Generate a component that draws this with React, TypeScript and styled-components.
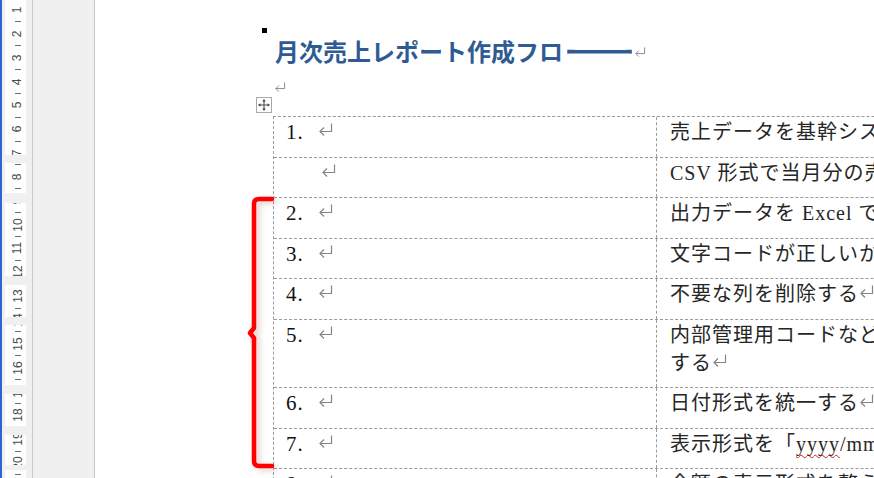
import type { ReactNode } from 'react';
import styled, { createGlobalStyle } from 'styled-components';

const GlobalStyle = createGlobalStyle`
  html, body {
    margin: 0;
    padding: 0;
    height: 100%;
    overflow: hidden;
    background: #fff;
  }
  #root {
    height: 100%;
  }
`;

type Step = {
    num?: string;
    lines: ReactNode[];
    mark?: boolean;
};

const rulerNumbers = Array.from({ length: 20 }, (_, i) => i + 1);

const ReturnMark = ({ small }: { small?: boolean }) => (
    <MarkSvg $small={small} viewBox="0 0 15 13">
        <path d="M13.5 0.5V8.5H2.2 M6 4.5L2 8.5L6 12.5" />
    </MarkSvg>
);

export default function App() {
    const steps: Step[] = [
        { num: '1.', lines: ['売上データを基幹システムから出力する'] },
        { lines: ['CSV 形式で当月分の売上データを抽出する'] },
        { num: '2.', lines: ['出力データを Excel で開いて確認する'] },
        { num: '3.', lines: ['文字コードが正しいか確認する'] },
        { num: '4.', lines: ['不要な列を削除する'], mark: true },
        { num: '5.', lines: ['内部管理用コードなどの不要な情報を非表示に', 'する'], mark: true },
        { num: '6.', lines: ['日付形式を統一する'], mark: true },
        {
            num: '7.',
            lines: [
                <>
                    表示形式を「<Squiggle>yyyy</Squiggle>/mm/dd」に統一する
                </>,
            ],
        },
        { num: '8.', lines: ['金額の表示形式を整える'] },
    ];

    return (
        <>
            <GlobalStyle />
            <Shell>
                <AccentEdge />
                <RulerBar>
                    <RulerStrip>
                        {rulerNumbers.map((n) => (
                            <RulerUnit key={n}>
                                <RulerCell>
                                    <RulerNum>{n}</RulerNum>
                                </RulerCell>
                                <RulerCell>
                                    <RulerTick />
                                </RulerCell>
                            </RulerUnit>
                        ))}
                    </RulerStrip>
                </RulerBar>
                <Gutter />
                <Page>
                    <Heading>
                        月次売上レポート作成フロ<LongBar>ー</LongBar>
                        <ReturnMark small />
                    </Heading>
                    <EmptyPara>
                        <ReturnMark small />
                    </EmptyPara>
                    <TableWrap>
                        <MoveHandle>
                            <svg width="12" height="12" viewBox="0 0 12 12">
                                <path d="M6 1.5V10.5M1.5 6H10.5" stroke="#444" strokeWidth="1" />
                                <path d="M6 0L4.2 2.4H7.8Z M6 12L4.2 9.6H7.8Z M0 6L2.4 4.2V7.8Z M12 6L9.6 4.2V7.8Z" fill="#444" />
                            </svg>
                        </MoveHandle>
                        <Bracket width="28" height="275" viewBox="0 0 28 275">
                            <path d="M24 3H11Q6 3 6 8V132L2 137L6 142V265Q6 270 11 270H24" />
                        </Bracket>
                        {steps.map((s, i) => (
                            <Row key={i}>
                                <NumCell>
                                    <NumLabel $empty={!s.num}>{s.num}</NumLabel>
                                    <ReturnMark />
                                </NumCell>
                                <TextCell>
                                    {s.lines.map((l, j) => (
                                        <Line key={j}>
                                            {l}
                                            {s.mark && j === s.lines.length - 1 && <ReturnMark />}
                                        </Line>
                                    ))}
                                </TextCell>
                            </Row>
                        ))}
                    </TableWrap>
                </Page>
            </Shell>
        </>
    );
}

const Shell = styled.div`
    display: flex;
    height: 478px;
    overflow: hidden;
`;

const AccentEdge = styled.div`
    width: 2px;
    flex-shrink: 0;
    background: #2b64d6;
`;

const RulerBar = styled.div`
    width: 31px;
    flex-shrink: 0;
    box-sizing: border-box;
    padding-left: 3px;
    padding-right: 6px;
    background: #f0f0f0;
    border-right: 1px solid #c8c8c8;
`;

const RulerStrip = styled.div`
    position: relative;
    height: 100%;
    background: #fff;
    padding-top: 4px;
    box-sizing: border-box;
    display: flex;
    flex-direction: column;

    // gray breaks over the scale, as the screen shows them
    &::after {
        content: '';
        position: absolute;
        inset: 0;
        background: linear-gradient(
            180deg,
            transparent 155px,
            #f0f0f0 155px 163px,
            transparent 163px 193px,
            #f0f0f0 193px 203px,
            transparent 203px 276px,
            #f0f0f0 276px 285px,
            transparent 285px 317px,
            #f0f0f0 317px 325px,
            transparent 325px 385px,
            #f0f0f0 385px 394px,
            transparent 394px 426px,
            #f0f0f0 426px 435px,
            transparent 435px 465px,
            #f0f0f0 465px 470px,
            transparent 470px
        );
    }
`;

const RulerUnit = styled.div`
    display: flex;
    flex-direction: column;
    flex-shrink: 0;
`;

const RulerCell = styled.div`
    height: 11.93px;
    display: flex;
    align-items: center;
    justify-content: center;
    padding-left: 4px;
`;

const RulerNum = styled.span`
    display: inline-block;
    transform: rotate(-90deg);
    font-family: 'Liberation Sans', Arial, sans-serif;
    font-size: 12px;
    line-height: 12px;
    color: #4a4a4a;
    white-space: nowrap;
`;

const RulerTick = styled.span`
    width: 6px;
    height: 1px;
    background: #6e6e6e;
`;

const Gutter = styled.div`
    width: 62px;
    flex-shrink: 0;
    box-sizing: border-box;
    background: #f0f0f0;
    border-right: 1px solid #c6c6c6;
`;

const Page = styled.main`
    flex: 1;
    min-width: 0;
    background: #fff;
    padding: 26px 0 0 180px;
    overflow: hidden;
`;

const Heading = styled.h1`
    position: relative;
    margin: 0;
    padding-top: 8px;
    font-family: 'Noto Sans CJK JP', sans-serif;
    font-weight: 700;
    font-size: 24px;
    line-height: 34px;
    color: #2f5b93;
    white-space: nowrap;

    &::before {
        content: '';
        position: absolute;
        left: -13px;
        top: 2px;
        width: 5px;
        height: 5px;
        background: #000;
    }

    svg {
        vertical-align: 4px;
    }
`;

const LongBar = styled.span`
    display: inline-block;
    width: 24px;
    margin-right: 50px;
    margin-left: -3px;
    transform: scaleX(3.3);
    transform-origin: left center;
`;

const MarkSvg = styled.svg<{ $small?: boolean }>`
    width: ${(p) => (p.$small ? 12 : 15)}px;
    height: ${(p) => (p.$small ? 10 : 13)}px;
    fill: none;
    stroke: #858585;
    stroke-width: 1.2;
    vertical-align: 3px;
`;

const EmptyPara = styled.div`
    height: 48px;
    box-sizing: border-box;
    padding-top: 14px;
    margin-left: -1px;

    svg {
        display: block;
    }
`;

const TableWrap = styled.div`
    position: relative;
    margin-left: -2px;
    width: 760px;
    border-top: 1px dashed #9a9a9a;
    border-left: 1px dashed #9a9a9a;
`;

const MoveHandle = styled.div`
    position: absolute;
    left: -18px;
    top: -20px;
    width: 16px;
    height: 16px;
    box-sizing: border-box;
    border: 1px solid #a8a8a8;
    background: #fff;
    display: flex;
    align-items: center;
    justify-content: center;
`;

const Bracket = styled.svg`
    position: absolute;
    left: -26px;
    top: 79px;
    z-index: 2;
    fill: none;
    stroke: #ff0000;
    stroke-width: 4.5;
    stroke-linejoin: round;
    stroke-linecap: round;
    filter: drop-shadow(3px 2px 3px rgba(170, 90, 90, 0.35));
    overflow: visible;
`;

const Row = styled.div`
    display: grid;
    grid-template-columns: 382px 1fr;
    border-bottom: 1px dashed #9a9a9a;
`;

const NumCell = styled.div`
    padding: 1px 0 10.5px 12px;
    font-family: 'Liberation Serif', 'Noto Sans CJK JP', serif;
    font-size: 21px;
    line-height: 28px;
    color: #111;
    white-space: nowrap;
`;

const NumLabel = styled.span<{ $empty?: boolean }>`
    display: inline-block;
    width: ${(p) => (p.$empty ? 35 : 32)}px;
    letter-spacing: 1px;
`;

const TextCell = styled.div`
    border-left: 1px dashed #9a9a9a;
    padding: 1px 12px 10.5px 13px;
    font-family: 'Liberation Serif', 'Noto Sans CJK JP', serif;
    font-size: 20px;
    line-height: 28px;
    letter-spacing: 1px;
    color: #262626;
    white-space: nowrap;
`;

const Line = styled.div``;

const Squiggle = styled.span`
    text-decoration: underline wavy #e01818;
    text-decoration-thickness: 1px;
    text-underline-offset: 3px;
    text-decoration-skip-ink: none;
`;
